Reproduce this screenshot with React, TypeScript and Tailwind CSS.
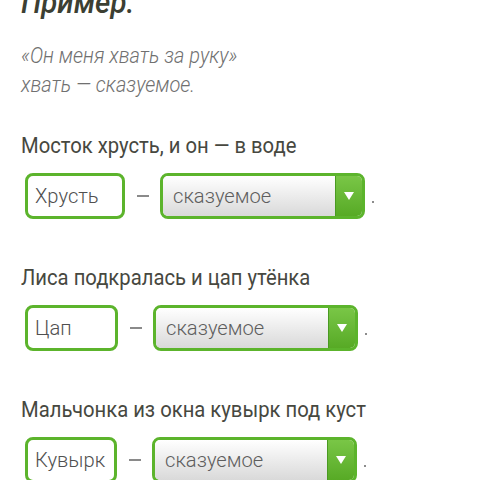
import React from "react";

const rows = [
  { label: "Мосток хрусть, и он — в воде", word: "Хрусть", w: "w-[100px]" },
  { label: "Лиса подкралась и цап утёнка", word: "Цап", w: "w-[93px]" },
  { label: "Мальчонка из окна кувырк под куст", word: "Кувырк", w: "w-[92px]" },
];

function Row({ label, word, w }: { label: string; word: string; w: string }) {
  return (
    <div className="flex flex-col">
      <div className="h-[26px] leading-[26px] text-[22px] text-[#47483f] whitespace-nowrap">
        <span className="inline-block origin-left scale-x-[0.92]">{label}</span>
      </div>
      <div className="mt-[14px] ml-[4px] flex items-center h-[46px]">
        <div className={`${w} h-[46px] border-[3px] border-[#5cb42c] rounded-[8px] bg-white flex items-center pl-[7px] pt-[2px] text-[21px] font-light text-[#505050] shrink-0 whitespace-nowrap`}>
          <span className="inline-block origin-left scale-x-[0.96]">{word}</span>
        </div>
        <div className="w-[12px] mx-[11.5px] h-[1.5px] bg-[#8a8a8a] shrink-0" />
        <div className="w-[205px] h-[46px] border-[3px] border-[#5cb42c] rounded-[8px] flex overflow-hidden shrink-0">
          <div className="flex-1 flex items-center pl-[10px] pt-[2px] text-[21px] font-light text-[#5e5e5e] bg-gradient-to-b from-white to-[#d9d9d9]">
            <span className="inline-block origin-left scale-x-[0.96]">сказуемое</span>
          </div>
          <div className="w-[27px] border-l border-[#4a9a22] bg-gradient-to-b from-[#79c646] to-[#57aa25] flex items-center justify-center">
            <svg width="10" height="8" viewBox="0 0 10 8">
              <polygon points="0,0 10,0 5,8" fill="#fff" />
            </svg>
          </div>
        </div>
        <div className="ml-[7px] self-end mb-[16px] w-[2px] h-[2px] bg-[#666] rounded-full" />
      </div>
    </div>
  );
}

export default function App() {
  return (
    <div className="w-[480px] h-[480px] overflow-hidden bg-white font-['Roboto',sans-serif] pl-[21px] relative">
      <div className="mt-[-14px] h-[32px] leading-[32px] text-[32px] italic font-medium text-[#3c3f33] whitespace-nowrap">
        <span className="inline-block origin-left scale-x-[0.92]">Пример.</span>
      </div>
      <div className="mt-[23px] text-[21.5px] leading-[29px] italic font-light text-[#707070] whitespace-nowrap">
        <div><span className="inline-block origin-left scale-x-[0.93]">«Он меня хвать за руку»</span></div>
        <div><span className="inline-block origin-left scale-x-[0.93]">хвать — сказуемое.</span></div>
      </div>
      <div className="mt-[34px] flex flex-col gap-[46px]">
        {rows.map((r) => (
          <Row key={r.word} {...r} />
        ))}
      </div>
    </div>
  );
}
